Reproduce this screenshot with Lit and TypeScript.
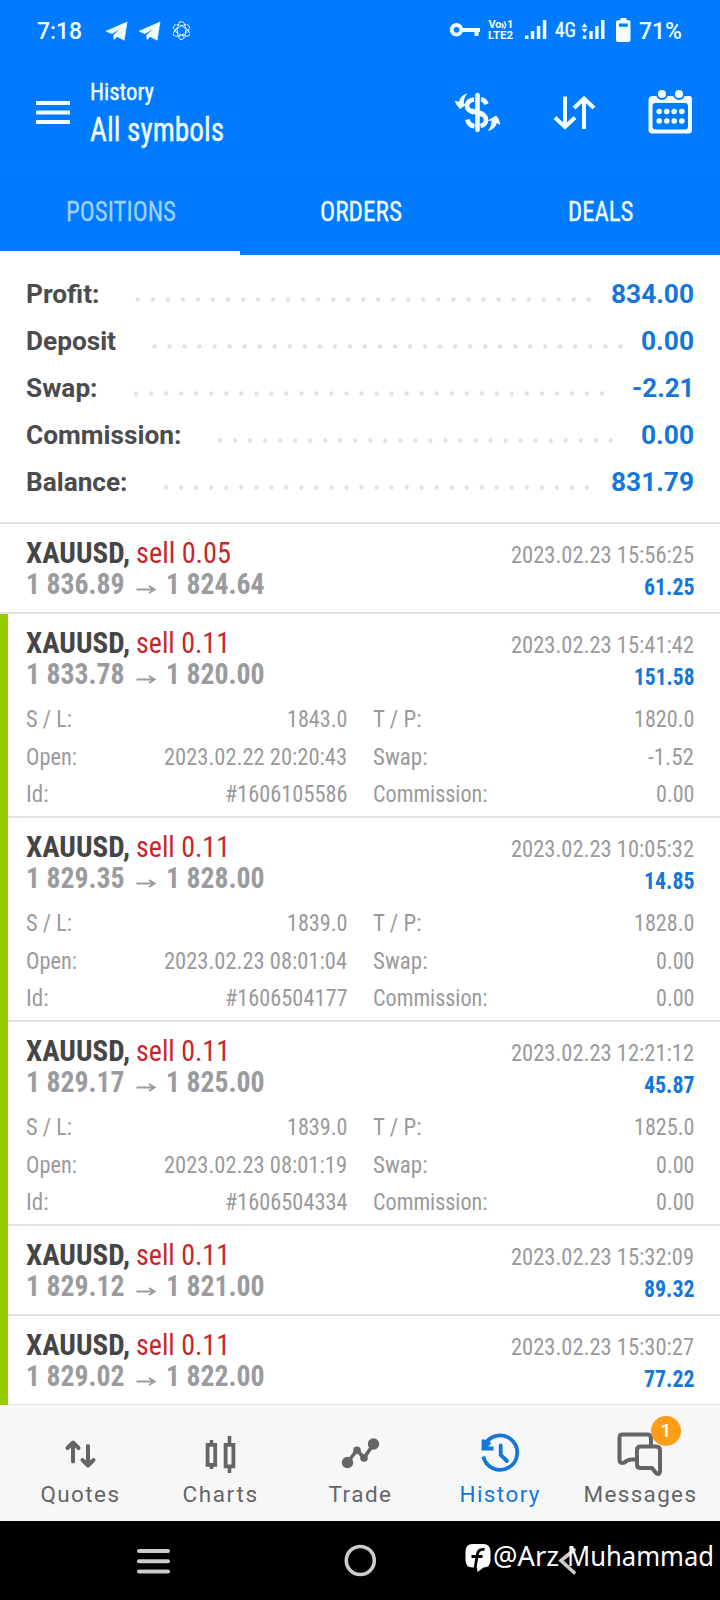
import { LitElement, html, css, svg, nothing } from "lit";
import { customElement, property } from "lit/decorators.js";

/** One line of text set to a fixed advance width; the baseline sits `base` px below the line's top. */
const line = (text: string, width: number, cls: string, height: number, base: number) => html`
  <svg class="line ${cls}" width=${width} height=${height}>
    <text x="0" y=${base} textLength=${width} lengthAdjust="spacingAndGlyphs">${text}</text>
  </svg>`;

const textStyles = css`
  svg { display: block; flex: none; overflow: visible; }
  .line {
    font-family: "Roboto Condensed", Roboto, "Liberation Sans", sans-serif;
    font-stretch: 75%;
    fill: currentColor;
  }
  .wide { font-family: Roboto, "Liberation Sans", sans-serif; font-stretch: 100%; }
`;

@customElement("status-bar")
class StatusBar extends LitElement {
  static styles = [textStyles, css`
    :host { display: flex; height: 60px; padding: 0 38px 0 37px; justify-content: space-between; color: #f2fdff; box-sizing: border-box; }
    .group { display: flex; }
    .clock { font-size: 23px; font-weight: 500; }
    .net { font-size: 20.5px; stroke: currentColor; stroke-width: .4px; }
    .tiny { font: 700 11px Roboto, sans-serif; fill: currentColor; }
  `];
  render() {
    const plane = (x: number) => svg`<path d="M${x} 31.200 L${x + 21} 22 L${x + 18.2} 40.200 L${x + 11} 36.500 L${x + 8.2} 39.500 L${x + 7.6} 35.200 L${x + 15.5} 27.600 L${x + 6} 33.800 Z" fill="currentColor" stroke="currentColor" stroke-width=".6" stroke-linejoin="round"/>`;
    return html`
      <div class="group">
        ${line("7:18", 45, "clock wide", 60, 39)}
        <svg width="118" height="60">
          ${plane(24)}${plane(57)}
          <g fill="none" stroke="currentColor" stroke-width="1.1" stroke-dasharray="2.4 .8">
            <ellipse cx="99.500" cy="30.500" rx="4.200" ry="9"/>
            <ellipse cx="99.500" cy="30.500" rx="4.200" ry="9" transform="rotate(60 99.500 30.500)"/>
            <ellipse cx="99.500" cy="30.500" rx="4.200" ry="9" transform="rotate(-60 99.500 30.500)"/>
          </g>
        </svg>
      </div>
      <div class="group">
        <svg width="105" height="60" fill="currentColor">
          <circle cx="6.500" cy="29.800" r="4.800" fill="none" stroke="currentColor" stroke-width="3.800"/>
          <path d="M12 28h18v4h-1.500v4h-4v-4H12z"/>
          <text class="tiny" x="38.500" y="28.300" textLength="13" lengthAdjust="spacingAndGlyphs">Vo</text>
          <path d="M52 23.500q2 2 0 4.600M54 21.500q3.400 4 0 7.300" fill="none" stroke="currentColor" stroke-width="1.400"/>
          <text class="tiny" x="57" y="28.300" textLength="6">1</text>
          <text class="tiny" x="38" y="39" textLength="25" lengthAdjust="spacingAndGlyphs">LTE2</text>
          <path d="M75 35.500h3.500V39H75zM80.800 31h3.500v8h-3.500zM86.800 26h3.500v13h-3.500zM92.800 20h3.500v19h-3.500z"/>
        </svg>
        ${line("4G", 21, "net", 60, 36.5)}
        <svg width="63" height="60" fill="currentColor">
          <path d="M8.500 23.300l-3 4h6zM8.500 32.800l-3-4h6zM6.800 35.500h3.400V39H6.800zM13.300 31h3.400v8h-3.400zM19.200 26h3.400v13h-3.400zM25 20h3.500v19H25z"/>
          <path d="M44.500 18h6v2.300h2.200q1.800 0 1.800 1.800v18q0 1.900-1.800 1.900H41.800q-1.800 0-1.800-1.900v-18q0-1.800 1.800-1.800h2.700zM43 23.500v3.200h8.800v-3.200z" fill-rule="evenodd"/>
        </svg>
        ${line("71%", 43, "clock wide", 60, 39)}
      </div>`;
  }
}

@customElement("app-header")
class AppHeader extends LitElement {
  static styles = [textStyles, css`
    :host { display: flex; height: 105px; padding: 0 34px 0 36px; box-sizing: border-box; color: #f2fdff; border-bottom: 1px solid #0074f2; }
    .titles { display: flex; flex-direction: column; padding-left: 19px; flex: 1; }
    .line { stroke: currentColor; stroke-width: .4px; }
    .title { font-size: 24px; }
    .sub { font-size: 33px; }
  `];
  render() {
    return html`
      <svg width="35" height="104" fill="currentColor"><path d="M0 41h34v4H0zM0 50.500h34v4H0zM0 60h34v4H0z"/></svg>
      <div class="titles">
        ${line("History", 64, "title", 48, 40)}
        ${line("All symbols", 134, "sub", 40, 33)}
      </div>
      <svg width="240" height="104" fill="none" stroke="currentColor">
        <g stroke-width="4.600">
          <path d="M31.500 35v35" stroke-linecap="round"/>
          <path d="M28 39.500q-7 1-7 6.500 0 4 6.500 6.500M35 39.300q4 .5 5.500 5M33 52.500q7 2.500 7 7.300 0 5-5.500 6.200M21.500 59.500q1 6 7 6.700M25 50.500l11 4"/>
        </g>
        <g fill="currentColor" stroke="none">
          <path d="M21.500 33.500Q17.500 37.500 17.800 44l4.200-.5-8 5.500q-5-5.500-5-8.500l4 1.600Q14.500 34.500 21.500 33.500z"/>
          <path d="M41.500 71Q45.500 67.500 45.500 60.500l-4.500.5 9-5.500q4 4 4.200 9.500l-3.300-2Q49 69.500 41.500 71z"/>
        </g>
        <path d="M119 36.500v30M109 57.500l10 9.500 10-9.500M138 69V38M128 48l10-9.500 10 9.500" stroke-width="4"/>
        <g fill="currentColor" stroke="none">
          <path d="M207 36h37q2 0 2 4v30q0 3.500-3.500 3.500h-36q-4 0-4-3.500V40q0-4 4.500-4zM209.500 43q-3 0-3 3v20.500q0 3 3 3h29.500q3 0 3-3V46q0-3-3-3z" fill-rule="evenodd"/>
          <g stroke="#007aff" stroke-width="2"><circle cx="216" cy="34" r="5"/><circle cx="233" cy="34" r="5"/></g>
          ${[51.5, 61].map((y) => [213.2, 220.7, 228.2, 235.8].map((x) => svg`<circle cx=${x} cy=${y} r="2.800"/>`))}
        </g>
      </svg>`;
  }
}

@customElement("tab-strip")
class TabStrip extends LitElement {
  static styles = [textStyles, css`
    :host { display: grid; grid-template-columns: repeat(3, 1fr); height: 90px; color: #effcff; }
    .tab { display: flex; flex-direction: column; align-items: center; justify-content: space-between; font-size: 27px; }
    .tab .line { stroke: currentColor; stroke-width: .3px; margin-left: 1px; }
    .active { color: #9fd0ff; }
    .bar { width: 240px; height: 4px; background: #fff; }
  `];
  render() {
    return html`
      <div class="tab active">${line("POSITIONS", 110, "", 80, 55.5)}<div class="bar"></div></div>
      <div class="tab">${line("ORDERS", 82, "", 80, 55.5)}</div>
      <div class="tab">${line("DEALS", 65.5, "", 80, 55.5)}</div>`;
  }
}

interface Total { label: string; lw: number; value: string; vw: number; from: number; count: number; }
const totals: Total[] = [
  { label: "Profit:", lw: 73.5, value: "834.00", vw: 83, from: 137.3, count: 31 },
  { label: "Deposit", lw: 90, value: "0.00", vw: 53, from: 154.5, count: 32 },
  { label: "Swap:", lw: 71.5, value: "-2.21", vw: 62.5, from: 135.6, count: 32 },
  { label: "Commission:", lw: 155.5, value: "0.00", vw: 53, from: 219.5, count: 27 },
  { label: "Balance:", lw: 101.5, value: "831.79", vw: 83, from: 165.6, count: 29 },
];

@customElement("account-totals")
class AccountTotals extends LitElement {
  static styles = [textStyles, css`
    :host { display: block; height: 269px; padding: 16px 26px 0 26px; box-sizing: border-box; border-bottom: 2px solid #e3e3e3; background: #fff; }
    .row { display: flex; height: 47px; font-size: 26px; }
    .label { color: #4b4b4d; font-weight: 700; }
    .value { color: #1477d8; font-weight: 700; }
    .dots { flex: 1; min-width: 0; }
  `];
  render() {
    return totals.map((t) => html`
      <div class="row">
        ${line(t.label, t.lw, "wide label", 47, 32)}
        <svg class="dots" height="47" fill="#e2e2e2">
          ${Array.from({ length: t.count }, (_, i) => svg`<circle cx=${t.from - 26 - t.lw + i * 15.03} cy="28.500" r="2.200"/>`)}
        </svg>
        ${line(t.value, t.vw, "wide value", 47, 32)}
      </div>`);
  }
}

interface Deal {
  lot: string; open: string; close: string; time: string; profit: string; marked: boolean;
  detail?: { sl: string; tp: string; opened: string; swap: string; id: string };
}
const deals: Deal[] = [
  { lot: "0.05", open: "1 836.89", close: "1 824.64", time: "2023.02.23 15:56:25", profit: "61.25", marked: false },
  { lot: "0.11", open: "1 833.78", close: "1 820.00", time: "2023.02.23 15:41:42", profit: "151.58", marked: true,
    detail: { sl: "1843.0", tp: "1820.0", opened: "2023.02.22 20:20:43", swap: "-1.52", id: "#1606105586" } },
  { lot: "0.11", open: "1 829.35", close: "1 828.00", time: "2023.02.23 10:05:32", profit: "14.85", marked: true,
    detail: { sl: "1839.0", tp: "1828.0", opened: "2023.02.23 08:01:04", swap: "0.00", id: "#1606504177" } },
  { lot: "0.11", open: "1 829.17", close: "1 825.00", time: "2023.02.23 12:21:12", profit: "45.87", marked: true,
    detail: { sl: "1839.0", tp: "1825.0", opened: "2023.02.23 08:01:19", swap: "0.00", id: "#1606504334" } },
  { lot: "0.11", open: "1 829.12", close: "1 821.00", time: "2023.02.23 15:32:09", profit: "89.32", marked: true },
  { lot: "0.11", open: "1 829.02", close: "1 822.00", time: "2023.02.23 15:30:27", profit: "77.22", marked: true },
];

@customElement("deal-row")
class DealRow extends LitElement {
  @property({ attribute: false }) deal!: Deal;
  static styles = [textStyles, css`
    :host { display: block; }
    .row { display: flex; background: #fff; }
    .mark { width: 7.5px; flex: none; margin-right: .5px; }
    .mark.on { background: #98cb00; }
    .mark.off { border-bottom: 2px solid #e3e3e3; width: 8px; margin-right: 0; }
    .body { flex: 1; padding: 0 26px 0 18px; border-bottom: 2px solid #e3e3e3; height: 88px; }
    .body.open { height: 202px; }
    .pair { display: flex; justify-content: space-between; }
    .bits { display: flex; }
    .symbol { font-size: 29.500px; font-weight: 700; color: #454547; margin-right: 6px; }
    .side { font-size: 30px; color: #c4282d; }
    .price { font-size: 29.500px; font-weight: 700; color: #9b9b9f; }
    .small { font-size: 24px; color: #9a9a9c; }
    .profit { font-size: 24px; font-weight: 700; color: #1477d8; }
    .detail { display: grid; grid-template-columns: 321px 321px; justify-content: space-between; padding-top: 6px; }
  `];
  render() {
    const d = this.deal;
    const cell = (label: string, lw: number, value: string, vw: number) => html`
      <div class="pair">${line(label, lw, "small", 37.5, 29)}${line(value, vw, "small", 37.5, 29)}</div>`;
    return html`
      <div class="row">
        <div class="mark ${d.marked ? "on" : "off"}"></div>
        <div class="body ${d.detail ? "open" : ""}">
          <div class="pair">
            <div class="bits">
              ${line("XAUUSD,", 104, "symbol", 46, 39)}
              ${line(`sell ${d.lot}`, d.lot === "0.11" ? 94 : 95, "side", 46, 39)}
            </div>
            ${line(d.time, 183, "small", 46, 39)}
          </div>
          <div class="pair">
            <div class="bits">
              ${line(d.open, 98.5, "price", 32, 24)}
              <svg width="41.500" height="32" fill="none" stroke="#9b9b9f" stroke-width="2"><path d="M11.500 19.500h17.500M24 16l5.500 3.500-5.500 3.500"/></svg>
              ${line(d.close, 98.5, "price", 32, 24)}
            </div>
            ${line(d.profit, d.profit.length > 5 ? 60.5 : 50.5, "profit", 32, 25)}
          </div>
          ${d.detail ? html`
            <div class="detail">
              ${cell("S / L:", 46, d.detail.sl, 60.5)}
              ${cell("T / P:", 48.5, d.detail.tp, 60.5)}
              ${cell("Open:", 51, d.detail.opened, 183)}
              ${cell("Swap:", 54.5, d.detail.swap, d.detail.swap.length > 4 ? 46 : 38.5)}
              ${cell("Id:", 22.5, d.detail.id, 122.5)}
              ${cell("Commission:", 114.5, "0.00", 38.5)}
            </div>` : nothing}
        </div>
      </div>`;
  }
}

const navIcons = {
  quotes: svg`<g fill="none" stroke="currentColor" stroke-width="4" stroke-linecap="round" stroke-linejoin="round"><path d="M63 56.500V38M57.500 43l5.500-5.500 5.500 5.500M78 41v19M72.500 55l5.500 5.500 5.500-5.500"/></g>`,
  charts: svg`<path d="M61.500 35v4M61.500 61v3M79.500 31v8M79.500 62v6" stroke="currentColor" stroke-width="3.600"/><path d="M57.600 39.800h7.600v20h-7.600zM75.600 39.800h7.800v21.500h-7.800z" fill="none" stroke="currentColor" stroke-width="3.800"/>`,
  trade: svg`<path d="M57.500 57.500L67 45l7 8 9.500-14" fill="none" stroke="currentColor" stroke-width="3.600"/><g fill="currentColor"><circle cx="57.500" cy="57.500" r="5.700"/><circle cx="67" cy="45.200" r="3.800"/><circle cx="74" cy="53" r="3.800"/><circle cx="83.500" cy="39" r="5.700"/></g>`,
  history: svg`<g fill="none" stroke="currentColor" stroke-width="3.800"><path d="M54.200 41A17.200 17.200 0 1 1 53.300 51.500"/><path d="M53.500 34.500v9h10M54 43l6-6"/><path d="M70.700 40.500V50l6.300 6" stroke-linecap="round"/></g>`,
  messages: svg`<g fill="#f7f7f7" stroke="currentColor" stroke-width="4" stroke-linejoin="round"><path d="M52.500 29.500h25q3.500 0 3.500 3.500v21.500H61.500q-4 0-7 3-5 1.500-5-2.500V32.500q0-3 3-3z"/><path d="M70.500 41.500h15.500q4 0 4 4v20.500q0 4.500-4 2l-4-5h-11.500q-3.500 0-3.500-3.500V45q0-3.500 3.500-3.500z"/></g>`,
};

@customElement("bottom-nav")
class BottomNav extends LitElement {
  static styles = [textStyles, css`
    :host { display: grid; grid-template-columns: repeat(5, 140px); justify-content: center; height: 116px; background: #f7f7f7; }
    .item { display: flex; flex-direction: column; align-items: center; color: #656567; position: relative; }
    .on { color: #1477d8; }
    .label { font-size: 22.500px; }
    .badge { position: absolute; left: 81px; top: 11px; width: 30px; height: 30px; border-radius: 50%; background: #ff9d17; color: #fff; font: 500 19px/30px Roboto, sans-serif; text-align: center; }
  `];
  render() {
    const items: [string, keyof typeof navIcons, number][] = [
      ["Quotes", "quotes", 78.5], ["Charts", "charts", 74.5], ["Trade", "trade", 62.5], ["History", "history", 80], ["Messages", "messages", 112.5],
    ];
    return items.map(([label, icon, w]) => html`
      <div class="item ${icon === "history" ? "on" : ""}">
        <svg width="140" height="74">${navIcons[icon]}</svg>
        <svg class="line wide label" width=${w} height="30"><text x="-.5" y="23" textLength=${w}>${label}</text></svg>
        ${icon === "messages" ? html`<div class="badge">1</div>` : nothing}
      </div>`);
  }
}

@customElement("system-bar")
class SystemBar extends LitElement {
  static styles = [textStyles, css`
    :host { display: grid; grid-template-columns: 308px 104px 308px; height: 79px; background: #000; position: relative; color: #ccc; }
    .mark { position: absolute; left: 465px; top: 20px; display: flex; color: #fff; }
    .name { font-family: "Noto Sans", "Open Sans", sans-serif; font-size: 26.500px; font-stretch: 100%; }
  `];
  render() {
    return html`
      <svg width="308" height="79" fill="currentColor"><rect x="137" y="28" width="33" height="4" rx="2"/><rect x="137" y="38.300" width="33" height="4" rx="2"/><rect x="137" y="48.600" width="33" height="4" rx="2"/></svg>
      <svg width="104" height="79" fill="none" stroke="currentColor" stroke-width="3.600"><circle cx="52.300" cy="39.500" r="14"/></svg>
      <svg width="308" height="79" fill="none" stroke="currentColor" stroke-width="3.600" stroke-linecap="round"><path d="M162 29l-13 10.500L162 51.500"/></svg>
      <div class="mark">
        <svg width="28" height="34">
          <path d="M7.500 3h10.500q7.500 0 7.500 7.500v8.500q0 7.500-7 7.500l-6 4.500-.5-4.500h-4.500Q.5 26.500.5 19v-8.500Q.5 3 7.500 3z" fill="#fff"/>
          <path d="M19.500 8.500q-6-1-7.200 5L10 28M6.500 15.500h11" fill="none" stroke="#000" stroke-width="2.800"/>
        </svg>
        ${line("@Arz", 66, "name", 34, 24.5)}
        <svg width="7.500" height="34"></svg>
        ${line("Muhammad", 147, "name", 34, 24.5)}
      </div>`;
  }
}

@customElement("app-root")
class AppRoot extends LitElement {
  static styles = css`
    :host { display: flex; flex-direction: column; width: 720px; height: 1600px; overflow: hidden; background: #fff; }
    .top { background: #007aff; }
    .list { height: 881px; overflow: hidden; }
  `;
  render() {
    return html`
      <div class="top"><status-bar></status-bar><app-header></app-header><tab-strip></tab-strip></div>
      <account-totals></account-totals>
      <div class="list">${deals.map((d) => html`<deal-row .deal=${d}></deal-row>`)}</div>
      <bottom-nav></bottom-nav>
      <system-bar></system-bar>`;
  }
}
